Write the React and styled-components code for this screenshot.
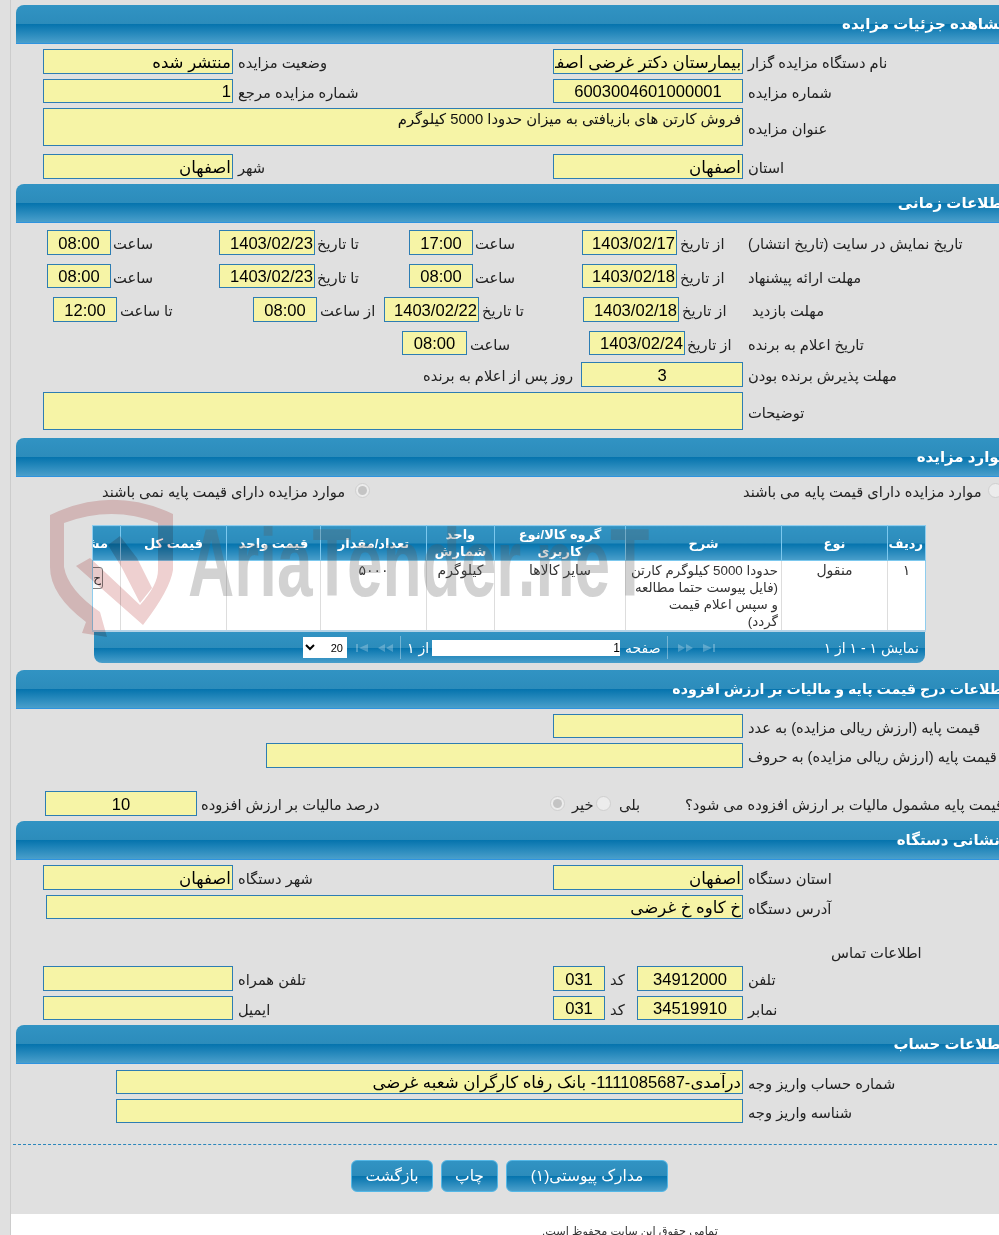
import React from 'react';
import styled, { createGlobalStyle } from 'styled-components';

const FONT = `"Liberation Sans", "DejaVu Sans", sans-serif`;
const BAR = 'linear-gradient(#3193c3 0%, #2c8cbb 50%, #0473ad 50%, #4a9fcb 100%)';
const COLUMNS = [38, 106, 156, 131, 68, 106, 94, 106, 28];

const Main = () => {
  return (
    <>
      <GlobalStyle />
      <Page>
        <Content>
          <SectionBar>مشاهده جزئیات مزایده</SectionBar>
          <Row $mt={5} $h={25} $pl={43}>
            <Field $w={190} value="منتشر شده" />
            <Label $ml={5} $w={315}>وضعیت مزایده</Label>
            <Field $w={190} value="بیمارستان دکتر غرضی اصفهان" />
            <Label $ml={5}>نام دستگاه مزایده گزار</Label>
          </Row>
          <Row $mt={5} $h={24} $pl={43}>
            <Field $w={190} value="1" />
            <Label $ml={5} $w={315}>شماره مزایده مرجع</Label>
            <Field $w={190} $center value="6003004601000001" />
            <Label $ml={5}>شماره مزایده</Label>
          </Row>
          <Row $mt={5} $h={38} $pl={43}>
            <Area $w={700} readOnly value="فروش کارتن های بازیافتی به میزان حدودا 5000 کیلوگرم" />
            <Label $ml={5}>عنوان مزایده</Label>
          </Row>
          <Row $mt={8} $h={25} $pl={43}>
            <Field $w={190} value="اصفهان" />
            <Label $ml={5} $w={315}>شهر</Label>
            <Field $w={190} value="اصفهان" />
            <Label $ml={5}>استان</Label>
          </Row>

          <SectionBar $mt={5}>اطلاعات زمانی</SectionBar>
          <Row $mt={7} $h={25} $pl={47}>
            <Field $w={64} $center value="08:00" />
            <Label $ml={2} $w={106}>ساعت</Label>
            <Field $w={96} value="1403/02/23" />
            <Label $ml={2} $w={92}>تا تاریخ</Label>
            <Field $w={64} $center value="17:00" />
            <Label $ml={2} $w={107}>ساعت</Label>
            <Field $w={95} value="1403/02/17" />
            <Label $ml={3} $w={68}>از تاریخ</Label>
            <Label>تاریخ نمایش در سایت (تاریخ انتشار)</Label>
          </Row>
          <Row $mt={9} $h={24} $pl={47}>
            <Field $w={64} $center value="08:00" />
            <Label $ml={2} $w={106}>ساعت</Label>
            <Field $w={96} value="1403/02/23" />
            <Label $ml={2} $w={92}>تا تاریخ</Label>
            <Field $w={64} $center value="08:00" />
            <Label $ml={2} $w={107}>ساعت</Label>
            <Field $w={95} value="1403/02/18" />
            <Label $ml={3} $w={68}>از تاریخ</Label>
            <Label>مهلت ارائه پیشنهاد</Label>
          </Row>
          <Row $mt={9} $h={25} $pl={53}>
            <Field $w={64} $center value="12:00" />
            <Label $ml={3} $w={133}>تا ساعت</Label>
            <Field $w={64} $center value="08:00" />
            <Label $ml={3} $w={64}>از ساعت</Label>
            <Field $w={95} value="1403/02/22" />
            <Label $ml={3} $w={101}>تا تاریخ</Label>
            <Field $w={96} value="1403/02/18" />
            <Label $ml={3} $w={70}>از تاریخ</Label>
            <Label>مهلت بازدید</Label>
          </Row>
          <Row $mt={9} $h={24} $pl={402}>
            <Field $w={65} $center value="08:00" />
            <Label $ml={3} $w={119}>ساعت</Label>
            <Field $w={96} value="1403/02/24" />
            <Label $ml={2} $w={61}>از تاریخ</Label>
            <Label>تاریخ اعلام به برنده</Label>
          </Row>
          <Row $mt={7} $h={25} $pl={423}>
            <Label $w={158}>روز پس از اعلام به برنده</Label>
            <Field $w={162} $center value="3" />
            <Label $ml={5}>مهلت پذیرش برنده بودن</Label>
          </Row>
          <Row $mt={5} $h={38} $pl={43}>
            <Area $w={700} readOnly value="" />
            <Label $ml={5}>توضیحات</Label>
          </Row>

          <SectionBar $mt={8}>موارد مزایده</SectionBar>
          <Row $mt={6} $h={14} $pl={102}>
            <Label $w={253}>موارد مزایده دارای قیمت پایه نمی باشند</Label>
            <Radio $checked />
            <Label $ml={373} $w={245}>موارد مزایده دارای قیمت پایه می باشند</Label>
            <Radio />
          </Row>

          <GridBox>
            <GridTable>
              <colgroup>
                {COLUMNS.map((width, index) => (
                  <col key={index} style={{ width }} />
                ))}
              </colgroup>
              <thead>
                <tr>
                  <HeadCell>ردیف</HeadCell>
                  <HeadCell>نوع</HeadCell>
                  <HeadCell>شرح</HeadCell>
                  <HeadCell>گروه کالا/نوع کاربری</HeadCell>
                  <HeadCell>واحد شمارش</HeadCell>
                  <HeadCell>تعداد/مقدار</HeadCell>
                  <HeadCell>قیمت واحد</HeadCell>
                  <HeadCell>قیمت کل</HeadCell>
                  <HeadCell $clip>مشاهده</HeadCell>
                </tr>
              </thead>
              <tbody>
                <tr>
                  <BodyCell>۱</BodyCell>
                  <BodyCell>منقول</BodyCell>
                  <BodyCell $wrap>
                    حدودا 5000 کیلوگرم کارتن
                    <br />
                    (فایل پیوست حتما مطالعه
                    <br />
                    و سپس اعلام قیمت
                    <br />
                    گردد)
                  </BodyCell>
                  <BodyCell>سایر کالاها</BodyCell>
                  <BodyCell>کیلوگرم</BodyCell>
                  <BodyCell>۵۰۰۰</BodyCell>
                  <BodyCell />
                  <BodyCell />
                  <BodyCell $clip>
                    <RowButton>ح</RowButton>
                  </BodyCell>
                </tr>
              </tbody>
            </GridTable>
            <Pager>
              <PageSize dir="rtl" defaultValue="20">
                <option value="20">20</option>
              </PageSize>
              <PagerIcons $ml={8}>
                <PagerIcon viewBox="0 0 13 10">
                  <path d="M1 1h2v8H1zM13 1v8L4 5z" />
                </PagerIcon>
                <PagerIcon viewBox="0 0 15 10" $w={15}>
                  <path d="M7 1v8L0 5zM15 1v8L8 5z" />
                </PagerIcon>
              </PagerIcons>
              <PagerSep $ml={7} />
              <PagerText $ml={6} $w={25}>از ۱</PagerText>
              <PageInput readOnly value="1" />
              <PagerText $ml={5} $w={42}>صفحه</PagerText>
              <PagerSep />
              <PagerIcons $ml={10}>
                <PagerIcon viewBox="0 0 15 10" $w={15}>
                  <path d="M0 1v8l7-4zM8 1v8l7-4z" />
                </PagerIcon>
                <PagerIcon viewBox="0 0 13 10">
                  <path d="M0 1v8l9-4zM10 1h2v8h-2z" />
                </PagerIcon>
              </PagerIcons>
              <PagerInfo>نمایش ۱ - ۱ از ۱</PagerInfo>
            </Pager>
          </GridBox>

          <SectionBar $mt={7} $fs={14.2}>اطلاعات درج قیمت پایه و مالیات بر ارزش افزوده</SectionBar>
          <Row $mt={5} $h={24} $pl={553}>
            <Field $w={190} value="" />
            <Label $ml={5}>قیمت پایه (ارزش ریالی مزایده) به عدد</Label>
          </Row>
          <Row $mt={5} $h={25} $pl={266}>
            <Field $w={477} value="" />
            <Label $ml={5}>قیمت پایه (ارزش ریالی مزایده) به حروف</Label>
          </Row>
          <Row $mt={23} $h={25} $pl={45}>
            <Field $w={152} $center value="10" />
            <Label $ml={4} $w={349}>درصد مالیات بر ارزش افزوده</Label>
            <Radio $checked />
            <Label $ml={7} $w={24}>خیر</Label>
            <Radio />
            <Label $ml={8} $w={66}>بلی</Label>
            <Label>قیمت پایه مشمول مالیات بر ارزش افزوده می شود؟</Label>
          </Row>

          <SectionBar $mt={5} $pr={20}>نشانی دستگاه</SectionBar>
          <Row $mt={5} $h={25} $pl={43}>
            <Field $w={190} value="اصفهان" />
            <Label $ml={5} $w={315}>شهر دستگاه</Label>
            <Field $w={190} value="اصفهان" />
            <Label $ml={5}>استان دستگاه</Label>
          </Row>
          <Row $mt={5} $h={24} $pl={46}>
            <Field $w={697} value="خ کاوه خ غرضی" />
            <Label $ml={5}>آدرس دستگاه</Label>
          </Row>
          <Row $mt={23} $h={18} $pl={831}>
            <Label>اطلاعات تماس</Label>
          </Row>
          <Row $mt={6} $h={25} $pl={43}>
            <Field $w={190} value="" />
            <Label $ml={5} $w={315}>تلفن همراه</Label>
            <Field $w={52} $center value="031" />
            <Label $ml={5} $w={27}>کد</Label>
            <Field $w={106} $center value="34912000" />
            <Label $ml={5}>تلفن</Label>
          </Row>
          <Row $mt={5} $h={24} $pl={43}>
            <Field $w={190} value="" />
            <Label $ml={5} $w={315}>ایمیل</Label>
            <Field $w={52} $center value="031" />
            <Label $ml={5} $w={27}>کد</Label>
            <Field $w={106} $center value="34519910" />
            <Label $ml={5}>نمابر</Label>
          </Row>

          <SectionBar $mt={5} $pr={14}>اطلاعات حساب</SectionBar>
          <Row $mt={6} $h={24} $pl={116}>
            <Field $w={627} value="درآمدی-1111085687- بانک رفاه کارگران شعبه غرضی" />
            <Label $ml={5}>شماره حساب واریز وجه</Label>
          </Row>
          <Row $mt={5} $h={24} $pl={116}>
            <Field $w={627} value="" />
            <Label $ml={5}>شناسه واریز وجه</Label>
          </Row>

          <DashedLine />
          <ButtonRow>
            <ActionButton $w={82}>بازگشت</ActionButton>
            <ActionButton $w={57}>چاپ</ActionButton>
            <ActionButton $w={162}>مدارک پیوستی(۱)</ActionButton>
          </ButtonRow>
          <Footer>تمامی حقوق این سایت محفوظ است.</Footer>
        </Content>

        <Watermark>
          <Shield viewBox="0 0 160 160">
            <path d="M10 25Q72 -5 133 24L133 80Q130 100 103 135L36 76L50 68L100 115Q118 95 118 80L118 33Q72 15 24 33L24 77Q28 100 60 122L67 147L42 143L46 132Q10 105 10 77Z" />
            <path d="M80 46L97 68L112 98L100 113L82 78L68 55Z" />
          </Shield>
          <MarkText>AriaTender.neT</MarkText>
        </Watermark>
      </Page>
    </>
  );
};

export default Main;

const GlobalStyle = createGlobalStyle`
  html, body {
    margin: 0;
    background: #e0e0e0;
    overflow: hidden;
  }
`;

const Page = styled.div`
  position: relative;
  width: 999px;
  height: 1235px;
  overflow: hidden;
  font-family: ${FONT};
`;

const Content = styled.div`
  width: 1010px;
  height: 1235px;
  margin-left: 10px;
  padding-top: 5px;
  box-sizing: border-box;
  border-left: 1px solid #cccccc;
  display: flex;
  flex-direction: column;
`;

const SectionBar = styled.div`
  flex: none;
  box-sizing: border-box;
  height: 39px;
  margin: ${(props) => props.$mt || 0}px 0 0 5px;
  padding-right: ${(props) => props.$pr || 12}px;
  direction: rtl;
  background: ${BAR};
  border-bottom: 1px solid #2e93df;
  border-top-left-radius: 8px;
  color: #ffffff;
  font-size: ${(props) => props.$fs || 15}px;
  font-weight: bold;
  line-height: 38px;
  white-space: nowrap;
`;

const Row = styled.div`
  flex: none;
  display: flex;
  align-items: center;
  height: ${(props) => props.$h}px;
  margin-top: ${(props) => props.$mt || 0}px;
  margin-left: -11px;
  padding-left: ${(props) => props.$pl || 0}px;
`;

const Label = styled.span`
  flex: none;
  ${(props) => (props.$w ? `width: ${props.$w}px;` : '')}
  margin-left: ${(props) => props.$ml || 0}px;
  padding-top: 2px;
  direction: rtl;
  text-align: left;
  white-space: nowrap;
  color: #222222;
  font-size: 14.7px;
`;

const Field = styled.input.attrs({ readOnly: true })`
  flex: none;
  box-sizing: border-box;
  width: ${(props) => props.$w}px;
  height: 100%;
  padding: 2px 1px 0;
  direction: rtl;
  text-align: ${(props) => (props.$center ? 'center' : 'right')};
  background: #f6f4a6;
  border: 1px solid #2d7db3;
  border-radius: 0;
  outline: none;
  color: #000000;
  font-family: ${FONT};
  font-size: 16.6px;
`;

const Area = styled.textarea`
  flex: none;
  box-sizing: border-box;
  width: ${(props) => props.$w}px;
  height: 100%;
  padding: 1px;
  direction: rtl;
  resize: none;
  background: #f6f4a6;
  border: 1px solid #2d7db3;
  border-radius: 0;
  outline: none;
  color: #111111;
  font-family: ${FONT};
  font-size: 14.8px;
`;

const Radio = styled.span`
  flex: none;
  position: relative;
  box-sizing: border-box;
  width: 15px;
  height: 15px;
  border: 1px solid #cfcfcf;
  border-radius: 50%;
  background: #ececec;

  &::after {
    content: '';
    display: ${(props) => (props.$checked ? 'block' : 'none')};
    width: 9px;
    height: 9px;
    margin: 2px;
    border-radius: 50%;
    background: #c4c4c4;
  }
`;

const GridBox = styled.div`
  flex: none;
  width: 833px;
  margin: 28px 0 0 81px;
`;

const GridTable = styled.table`
  width: 833px;
  table-layout: fixed;
  border-collapse: collapse;
  direction: rtl;
  border: 1px solid #8fcdee;
  border-bottom: 2px solid #b5d3e6;
  background: #ffffff;
`;

const HeadCell = styled.th`
  height: 34px;
  padding: 0 ${(props) => (props.$clip ? '12px' : '2px')} 0 ${(props) => (props.$clip ? '0' : '2px')};
  background: ${BAR};
  border-left: 1px solid #7cc8ee;
  border-bottom: 1px solid #7cc8ee;
  color: #ffffff;
  font-size: 13px;
  line-height: 17px;
  font-weight: bold;
  ${(props) => (props.$clip ? 'overflow: hidden; white-space: nowrap; text-align: right; border-left: 0;' : '')}
`;

const BodyCell = styled.td`
  box-sizing: border-box;
  height: 69px;
  padding: ${(props) => (props.$clip ? '6px 17px 0 0' : '1px 3px 0')};
  vertical-align: top;
  text-align: ${(props) => (props.$wrap ? 'right' : 'center')};
  border-left: 1px solid #dddddd;
  color: #333333;
  font-size: ${(props) => (props.$wrap ? '13.4px' : '14px')};
  line-height: 17px;
  white-space: ${(props) => (props.$wrap || props.$clip ? 'nowrap' : 'normal')};
  ${(props) => (props.$clip ? 'overflow: hidden; border-left: 0;' : '')}
`;

const RowButton = styled.button`
  display: block;
  box-sizing: border-box;
  width: 40px;
  height: 22px;
  padding: 0 1px 0 0;
  direction: rtl;
  text-align: right;
  background: #f8f8f8;
  border: 1px solid #808080;
  border-radius: 3px;
  color: #333333;
  font-family: ${FONT};
  font-size: 12px;
`;

const Pager = styled.div`
  display: flex;
  align-items: center;
  box-sizing: border-box;
  width: 831px;
  height: 31px;
  margin-left: 2px;
  padding-left: 209px;
  background: ${BAR};
  border-bottom-left-radius: 8px;
  border-bottom-right-radius: 8px;
  color: #ffffff;
  font-size: 14px;
`;

const PageSize = styled.select`
  flex: none;
  box-sizing: border-box;
  width: 44px;
  height: 21px;
  padding: 0;
  background: #ffffff;
  border: 0;
  border-radius: 0;
  font-family: ${FONT};
  font-size: 11px;
`;

const PagerIcons = styled.div`
  flex: none;
  display: flex;
  gap: 10px;
  margin-left: ${(props) => props.$ml || 0}px;
`;

const PagerIcon = styled.svg`
  display: block;
  width: ${(props) => props.$w || 13}px;
  height: 10px;
  fill: rgba(255, 255, 255, 0.25);
`;

const PagerSep = styled.div`
  flex: none;
  width: 1px;
  height: 23px;
  margin-left: ${(props) => props.$ml || 0}px;
  background: rgba(255, 255, 255, 0.35);
`;

const PagerText = styled.span`
  flex: none;
  width: ${(props) => props.$w}px;
  margin-left: ${(props) => props.$ml || 0}px;
  direction: rtl;
  text-align: left;
  white-space: nowrap;
`;

const PageInput = styled.input`
  flex: none;
  box-sizing: border-box;
  width: 188px;
  height: 16px;
  padding: 0;
  direction: rtl;
  border: 0;
  outline: none;
  background: #ffffff;
  font-family: ${FONT};
  font-size: 12px;
`;

const PagerInfo = styled.span`
  margin-left: auto;
  padding-right: 6px;
  direction: rtl;
  white-space: nowrap;
`;

const DashedLine = styled.div`
  flex: none;
  width: 984px;
  margin: 21px 0 0 2px;
  border-top: 1px dashed #2b86bb;
`;

const ButtonRow = styled.div`
  flex: none;
  display: flex;
  gap: 8px;
  margin: 15px 0 0 340px;
`;

const ActionButton = styled.button`
  box-sizing: border-box;
  width: ${(props) => props.$w}px;
  height: 32px;
  padding: 0;
  direction: rtl;
  background: ${BAR};
  border: 1px solid #54b7e6;
  border-radius: 6px;
  color: #ffffff;
  font-family: ${FONT};
  font-size: 15.5px;
`;

const Footer = styled.div`
  flex: none;
  height: 60px;
  margin-top: 22px;
  padding: 9px 0 0 531px;
  direction: rtl;
  text-align: left;
  background: #ffffff;
  color: #333333;
  font-size: 11.3px;
  line-height: 16px;
`;

const Watermark = styled.div`
  position: absolute;
  top: 490px;
  left: 40px;
  width: 640px;
  height: 160px;
  pointer-events: none;
`;

const Shield = styled.svg`
  position: absolute;
  top: 0;
  left: 0;
  width: 160px;
  height: 160px;
  mix-blend-mode: multiply;
  fill: #eed0d0;
`;

const MarkText = styled.div`
  position: absolute;
  top: 18px;
  left: 148px;
  transform: scaleX(0.66);
  transform-origin: left top;
  color: rgba(90, 90, 90, 0.27);
  font-family: "Liberation Sans", sans-serif;
  font-size: 97px;
  font-weight: bold;
  line-height: 110px;
  white-space: nowrap;
`;
